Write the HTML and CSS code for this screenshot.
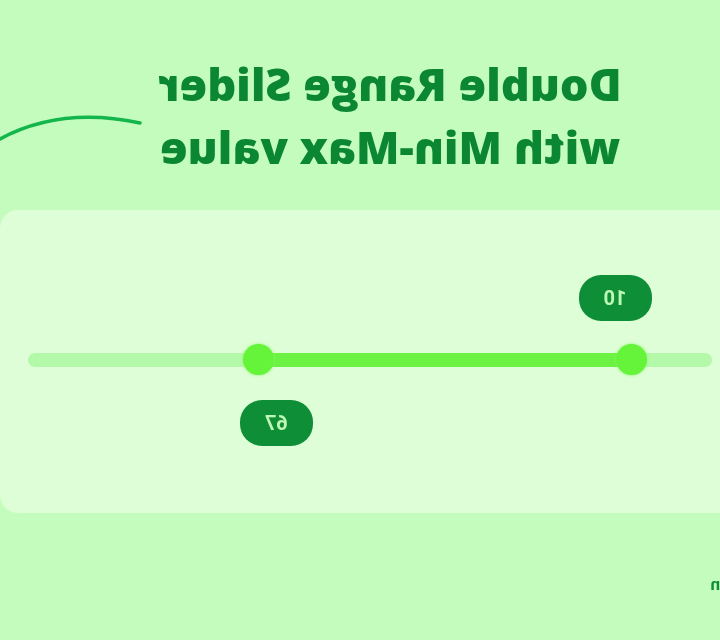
FILE: index.html
```html
<!DOCTYPE html>
<html lang="en">
<head>
	<meta charset="UTF-8">
	<title>Double Range Slider</title>
	<link rel="stylesheet" href="styles.css">
</head>
<body>
	<div class="stage">
		<!-- decorative stroke in the corner -->
		<svg class="swoosh" width="150" height="50" viewBox="0 0 150 50">
			<path d="M152 40 Q90 6 10 23" fill="none" stroke="#14b64c" stroke-width="3.5" stroke-linecap="round"/>
		</svg>

		<h1 class="title">Double Range Slider<br>with Min-Max value</h1>

		<div class="card">
			<div class="slider">
				<div class="track"></div>
				<div class="rail">
					<div class="fill" style="left:10%;width:57%"></div>
					<span class="thumb" style="left:10%"></span>
					<span class="thumb" style="left:67%"></span>
					<span class="tip tip_min" style="left:10%">10</span>
					<span class="tip tip_max" style="left:67%">67</span>
				</div>
			</div>
		</div>

		<div class="footer"><span>n</span></div>
	</div>
</body>
</html>
```

FILE: styles.css
```css
html,body,h1,div{margin:0;padding:0}

body{
	background-color: #c3fcbd;
	font-family: Roboto, "Noto Sans", sans-serif;
}

/* the whole scene is drawn mirrored */
.stage{
	width: 720px;
	height: 640px;
	overflow: hidden;
	position: relative;
	transform: scaleX(-1);
}

.swoosh{
	position: absolute;
	left: 570px;
	top: 100px;
}

.title{
	width: 660px;
	padding-top: 52px;
	text-align: center;
	font-family: "Open Sans", sans-serif;
	font-size: 45px;
	line-height: 63px;
	font-weight: 800;
	color: #0b8633;
}

.card{
	margin: 32px 0 0 -16px;
	width: 736px;
	height: 303px;
	box-sizing: border-box;
	padding: 143px 28px 0 24px;
	background-color: #ddfed6;
	border-radius: 18px;
}

.slider{
	position: relative;
	height: 14px;
}

.track{
	height: 14px;
	border-radius: 7px;
	background-color: #b4f9aa;
}

.rail{
	position: absolute;
	left: 15px;
	right: 15px;
	top: 0;
	bottom: 0;
}

.fill{
	position: absolute;
	top: 0;
	height: 14px;
	background-color: #6cf243;
}

.thumb{
	position: absolute;
	top: -9px;
	width: 31px;
	height: 31px;
	margin-left: -15px;
	border-radius: 50%;
	background-color: #66f43a;
	box-shadow: 0 0 3px #8af56a;
}

.tip{
	position: absolute;
	width: 73px;
	height: 46px;
	margin-left: -36px;
	border-radius: 22px;
	background-color: #0e8e37;
	color: #bdf8b4;
	font-size: 20px;
	font-weight: 700;
	line-height: 46px;
	text-align: center;
}

.tip_min{
	top: -78px;
	transform: translateX(16px);
}

.tip_max{
	top: 47px;
	transform: translateX(-18px);
}

.footer{
	margin-top: 61px;
	font-size: 17px;
	line-height: 20px;
	font-weight: 700;
	color: #0e8e37;
}
```
